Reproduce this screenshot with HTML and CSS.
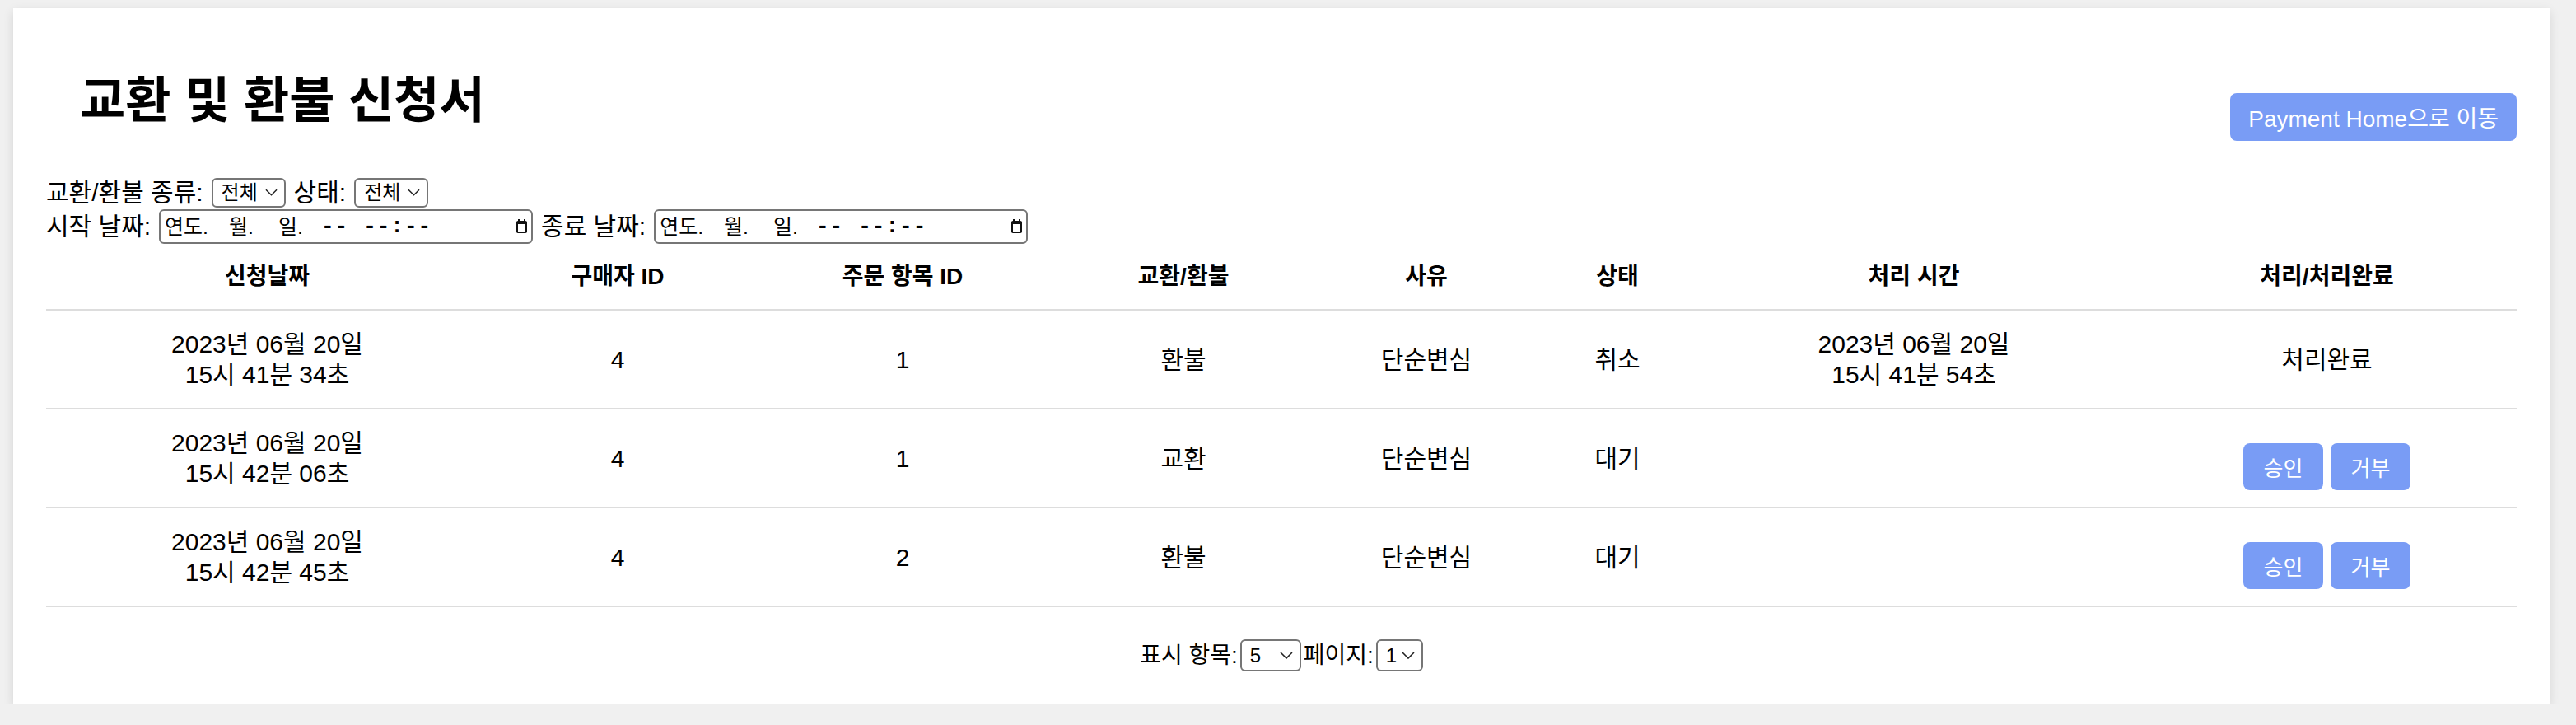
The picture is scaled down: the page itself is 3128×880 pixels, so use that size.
FILE: index.html
```html
<!DOCTYPE html>
<html lang="ko">
<head>
<meta charset="utf-8">
<title>교환 및 환불 신청서</title>
<link rel="stylesheet" href="styles.css">
</head>
<body>
<div class="card">
  <div class="header">
    <h1 class="title">교환 및 환불 신청서</h1>
    <button class="btn home-btn">Payment Home으로 이동</button>
  </div>

  <div class="filters">
    <div class="filter-row row1">
      <span class="label">교환/환불 종류:</span>
      <div class="select sel-md"><span>전체</span><svg class="chev" viewBox="0 0 16 9"><polyline points="1,1 8,8 15,1" fill="none" stroke="#222" stroke-width="1.6"/></svg></div>
      <span class="label">상태:</span>
      <div class="select sel-md"><span>전체</span><svg class="chev" viewBox="0 0 16 9"><polyline points="1,1 8,8 15,1" fill="none" stroke="#222" stroke-width="1.6"/></svg></div>
    </div>
    <div class="filter-row row2">
      <span class="label">시작 날짜:</span>
      <div class="dt-input">
        <span class="dt-y">연도.</span><span class="dt-m">월.</span><span class="dt-d">일.</span><span class="dt-mono dt-h">--</span><span class="dt-mono dt-t">--:--</span>
        <svg class="cal" viewBox="0 0 15 17"><rect x="3" y="0" width="2" height="3" fill="#111"/><rect x="10" y="0" width="2" height="3" fill="#111"/><path d="M3 2h9a2 2 0 0 1 2 2v11a2 2 0 0 1-2 2H3a2 2 0 0 1-2-2V4a2 2 0 0 1 2-2zM3 6v9h9V6z" fill="#111" fill-rule="evenodd"/></svg>
      </div>
      <span class="label">종료 날짜:</span>
      <div class="dt-input">
        <span class="dt-y">연도.</span><span class="dt-m">월.</span><span class="dt-d">일.</span><span class="dt-mono dt-h">--</span><span class="dt-mono dt-t">--:--</span>
        <svg class="cal" viewBox="0 0 15 17"><rect x="3" y="0" width="2" height="3" fill="#111"/><rect x="10" y="0" width="2" height="3" fill="#111"/><path d="M3 2h9a2 2 0 0 1 2 2v11a2 2 0 0 1-2 2H3a2 2 0 0 1-2-2V4a2 2 0 0 1 2-2zM3 6v9h9V6z" fill="#111" fill-rule="evenodd"/></svg>
      </div>
    </div>
  </div>

  <table class="grid">
    <colgroup>
      <col class="c1"><col class="c2"><col class="c3"><col class="c4"><col class="c5"><col class="c6"><col class="c7"><col class="c8">
    </colgroup>
    <thead>
      <tr>
        <th>신청날짜</th><th>구매자 ID</th><th>주문 항목 ID</th><th>교환/환불</th><th>사유</th><th>상태</th><th>처리 시간</th><th>처리/처리완료</th>
      </tr>
    </thead>
    <tbody>
      <tr>
        <td>2023년 06월 20일<br>15시 41분 34초</td><td>4</td><td>1</td><td>환불</td><td>단순변심</td><td>취소</td><td>2023년 06월 20일<br>15시 41분 54초</td><td>처리완료</td>
      </tr>
      <tr>
        <td>2023년 06월 20일<br>15시 42분 06초</td><td>4</td><td>1</td><td>교환</td><td>단순변심</td><td>대기</td><td></td>
        <td class="act"><div class="actions"><button class="btn act-btn">승인</button><button class="btn act-btn">거부</button></div></td>
      </tr>
      <tr>
        <td>2023년 06월 20일<br>15시 42분 45초</td><td>4</td><td>2</td><td>환불</td><td>단순변심</td><td>대기</td><td></td>
        <td class="act"><div class="actions"><button class="btn act-btn">승인</button><button class="btn act-btn">거부</button></div></td>
      </tr>
    </tbody>
  </table>

  <div class="pager">
    <span>표시 항목:</span>
    <div class="select sel-sm w74"><span>5</span><svg class="chev chev-sm" viewBox="0 0 16 9"><polyline points="1,1 8,8 15,1" fill="none" stroke="#222" stroke-width="1.6"/></svg></div>
    <span>페이지:</span>
    <div class="select sel-sm w57"><span>1</span><svg class="chev chev-sm" viewBox="0 0 16 9"><polyline points="1,1 8,8 15,1" fill="none" stroke="#222" stroke-width="1.6"/></svg></div>
  </div>
</div>
</body>
</html>
```
FILE: styles.css
```css
html, body {
  margin: 0;
  background: #f0f0f0;
}

body {
  font-family: "Liberation Sans", "Noto Sans CJK KR", sans-serif;
  color: #000;
}

.card {
  margin: 10px 32px 0 16px;
  padding: 40px;
  background: #fff;
  box-shadow: 0 4px 12px rgba(0, 0, 0, 0.12);
}

.header {
  display: flex;
  justify-content: space-between;
  align-items: flex-start;
  height: 164px;
}

.title {
  margin: 36px 0 0 41px;
  font-size: 60px;
  line-height: 74px;
  font-weight: 700;
}

.btn {
  border: none;
  background: #799cf5;
  color: #fff;
  font-family: "Liberation Sans", "Noto Sans CJK KR", sans-serif;
  border-radius: 8px;
  cursor: pointer;
}

.home-btn {
  margin-top: 63px;
  height: 58px;
  padding: 0 22px;
  font-size: 28px;
}

.filter-row {
  display: flex;
  align-items: center;
  gap: 10px;
  font-size: 30px;
  line-height: 34px;
}

.row1 { height: 39px; }
.row2 { height: 43px; }

.select {
  display: inline-flex;
  align-items: center;
  justify-content: space-between;
  box-sizing: border-box;
  border: 2px solid #767676;
  border-radius: 6px;
  background: #fff;
}

.sel-md {
  width: 90px;
  height: 36px;
  padding: 0 8px 0 10px;
  font-size: 24px;
  line-height: 28px;
}

.chev {
  width: 15px;
  height: 9px;
}

.chev-sm {
  width: 16px;
}

.dt-input {
  display: flex;
  align-items: center;
  box-sizing: border-box;
  width: 454px;
  height: 42px;
  padding: 0 4px 0 5px;
  border: 2px solid #767676;
  border-radius: 6px;
  font-size: 25px;
  line-height: 30px;
}

.dt-m { margin-left: 25px; }
.dt-d { margin-left: 30px; }
.dt-h { margin-left: 22px; }
.dt-t { margin-left: 18px; }

.dt-mono {
  font-family: "Liberation Mono", monospace;
  font-size: 26px;
  font-weight: 700;
  letter-spacing: 1px;
}

.cal {
  margin-left: auto;
  width: 15px;
  height: 17px;
}

.grid {
  width: 100%;
  table-layout: fixed;
  border-collapse: collapse;
}

.c1 { width: 537px; }
.c2 { width: 314px; }
.c3 { width: 378px; }
.c4 { width: 304px; }
.c5 { width: 286px; }
.c6 { width: 178px; }
.c7 { width: 542px; }
.c8 { width: 461px; }

.grid th {
  padding: 21px 0;
  font-size: 28px;
  line-height: 37px;
  font-weight: 700;
  text-align: center;
  border-bottom: 2px solid #dddddd;
}

.grid td {
  padding: 22px 0;
  font-size: 30px;
  line-height: 37px;
  text-align: center;
  vertical-align: middle;
  border-bottom: 2px solid #dddddd;
}

.grid td.act {
  padding: 32px 0 12px;
}

.actions {
  display: flex;
  justify-content: center;
  gap: 9px;
}

.act-btn {
  width: 97px;
  height: 57px;
  padding: 0;
  font-size: 26px;
}

.pager {
  display: flex;
  justify-content: center;
  align-items: center;
  gap: 3px;
  margin-top: 39px;
  height: 39px;
  font-size: 28px;
  line-height: 32px;
}

.sel-sm {
  height: 39px;
  padding: 0 8px 0 10px;
  font-size: 24px;
  line-height: 28px;
}

.w74 { width: 74px; }
.w57 { width: 57px; }
```
